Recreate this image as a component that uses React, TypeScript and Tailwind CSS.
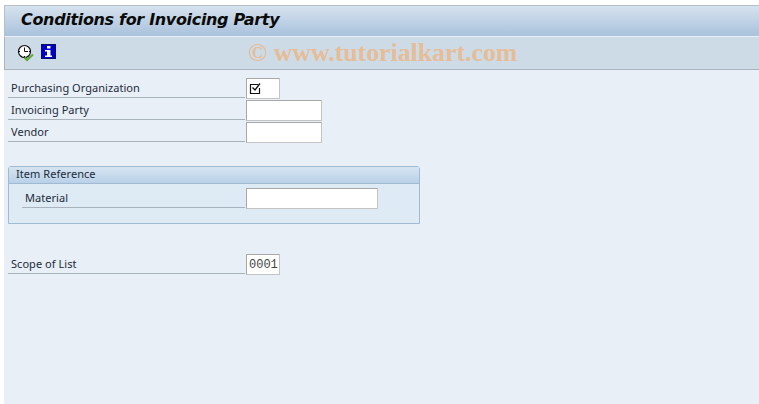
import React from 'react';

const Field = ({ label, width, value, check }: { label: string; width: string; value?: string; check?: boolean }) => (
  <div className="flex h-[22px]">
    <div className="w-[237px] h-[20px] border-b border-[#a9b3bc] pl-[3px] text-[11px] leading-[20px] tracking-[0.05px] text-[#1c2b39]">{label}</div>
    <div className={`${width} h-[21px] ml-px border border-[#a8a8a8] border-r-[#c4c4c4] border-b-[#c4c4c4] bg-white flex items-center pl-[2px] font-['Liberation_Mono',monospace] text-[12px] text-[#444]`}>
      {check && (
        <svg width="13" height="13" viewBox="0 0 13 13">
          <path d="M9 2.5H1.5V11.5H10.5V6" fill="none" stroke="#111" strokeWidth="1.2" />
          <path d="M3.5 5.5L6 8L11 1.5" fill="none" stroke="#111" strokeWidth="1.3" />
        </svg>
      )}
      {value}
    </div>
  </div>
);

export default function App() {
  return (
    <div className="w-[759px] h-[404px] overflow-hidden bg-white pl-1 pt-[5px] flex flex-col font-['Noto_Sans',sans-serif]">
      {/* title */}
      <div className="h-[32px] border-t border-l border-[#b5c0ca] bg-gradient-to-b from-[#d6e2ee] to-[#a9c2dc] pl-[16px] text-[16px] leading-[27px] font-bold italic text-[#0b0b0b] font-['DejaVu_Sans',sans-serif] tracking-[-0.33px] border-b border-b-[#e8eff6]">
        Conditions for Invoicing Party
      </div>

      {/* toolbar */}
      <div className="relative h-[33px] border-l border-b border-[#aab4bd] bg-[#cddbe7] flex items-start pt-[7px] pl-[12px] gap-[6px]">
        <svg width="18" height="18" viewBox="0 0 18 18">
          <circle cx="7.5" cy="7.5" r="6" fill="#fff" stroke="#111" strokeWidth="1.2" />
          <path d="M7.5 3.5V7.5H11M1.5 7.5H3M7.5 12V13.5M12 7.5H13.5" fill="none" stroke="#111" strokeWidth="1" />
          <path d="M7.5 13.5L10 16L16 10.5" fill="none" stroke="#5aa83a" strokeWidth="2" />
        </svg>
        <svg width="15" height="15" viewBox="0 0 15 15">
          <rect width="15" height="15" fill="#0000c8" />
          <rect x="0.5" y="0.5" width="14" height="14" fill="none" stroke="#0a0a6a" />
          <rect x="6" y="2" width="3.5" height="2.5" fill="#fff" />
          <path d="M4 6H9.5V11.5H11V13H4V11.5H6V7.5H4Z" fill="#fff" />
        </svg>
        <span className="absolute left-[243px] top-[1px] text-[25.8px] leading-[30px] font-bold font-['Liberation_Serif',serif] text-[#e6bd97]">© www.tutorialkart.com</span>
      </div>

      {/* form */}
      <div className="flex-1 bg-[#e8eff6] pl-[4px] pt-[8px]">
        <Field label="Purchasing Organization" width="w-[34px]" check />
        <Field label="Invoicing Party" width="w-[76px]" />
        <Field label="Vendor" width="w-[76px]" />

        <div className="w-[412px] h-[58px] mt-[22px] border border-[#9fbad3] rounded-t-[3px] bg-[#deeaf4]">
          <div className="h-[17px] border-b border-[#9fbad3] bg-gradient-to-b from-[#d6e4f1] to-[#b9d1e8] pl-[7px] text-[11px] leading-[14px] tracking-[0.05px] text-[#1c2b39]">Item Reference</div>
          <div className="flex h-[22px] mt-[4px] ml-[13px]">
            <div className="w-[223px] h-[20px] border-b border-[#a9b3bc] pl-[3px] text-[11px] leading-[20px] tracking-[0.05px] text-[#1c2b39]">Material</div>
            <div className="w-[132px] h-[21px] ml-px border border-[#a8a8a8] border-r-[#c4c4c4] border-b-[#c4c4c4] bg-white" />
          </div>
        </div>

        <div className="mt-[30px]">
          <Field label="Scope of List" width="w-[34px]" value="0001" />
        </div>
      </div>
    </div>
  );
}
